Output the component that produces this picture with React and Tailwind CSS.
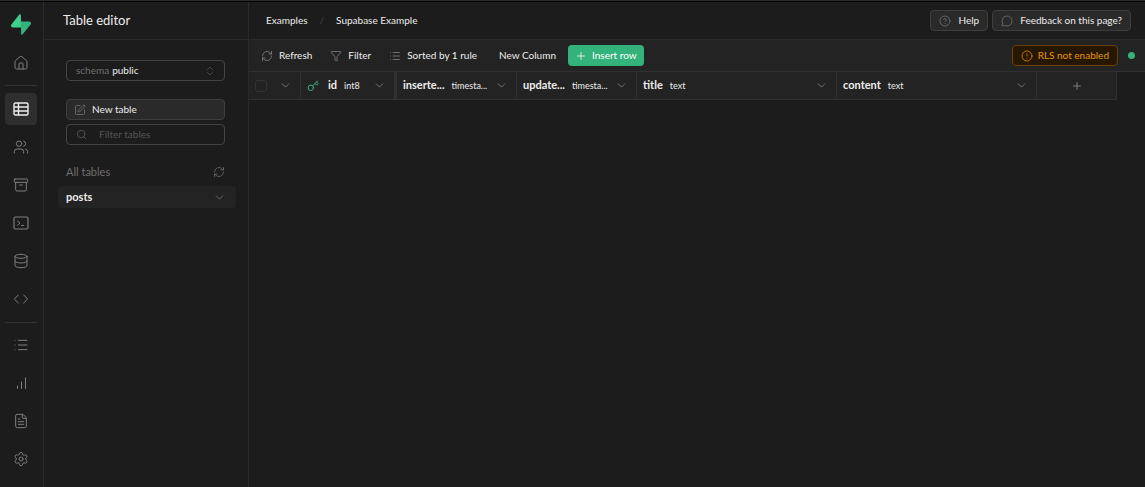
import {
  Archive,
  ChevronDown,
  ChevronsUpDown,
  CircleAlert,
  CircleQuestionMark,
  Code,
  Database,
  FileText,
  Funnel,
  House,
  List,
  MessageCircle,
  Plus,
  RefreshCw,
  Search,
  Settings,
  SquarePen,
  Users,
} from "lucide-react";

const navIcon = { size: 16, strokeWidth: 1.5, "aria-hidden": true };
const smallIcon = { size: 12, strokeWidth: 1.5, "aria-hidden": true };
const chevron = { size: 13, strokeWidth: 1.5, "aria-hidden": true };

const Logo = () => (
  <svg width="20" height="21" viewBox="0 0 109 113" aria-hidden="true">
    <path
      d="M63.7 110.3c-2.900 3.600-8.700 1.600-8.700-3L54 40h45.200c8.200 0 12.800 9.500 7.700 15.900z"
      fill="#34b27b"
    />
    <path
      d="M45.300 2.100c2.900-3.600 8.700-1.600 8.700 3l.4 67.200H9.800C1.600 72.300-2.900 62.800 2.200 56.400z"
      fill="#3ecf8e"
    />
  </svg>
);

const TableIcon = () => (
  <svg width="16" height="14" viewBox="0 0 16 14" fill="none" stroke="currentColor" strokeWidth="1.4" aria-hidden="true">
    <rect x="1" y="1" width="14" height="12" rx="1.5" />
    <path d="M1 5h14M1 9h14M5.500 1v12" />
  </svg>
);

const TerminalIcon = () => (
  <svg width="16" height="14" viewBox="0 0 16 14" fill="none" stroke="currentColor" strokeLinecap="round" strokeLinejoin="round" aria-hidden="true">
    <rect x="1" y="1" width="14" height="12" rx="1.5" strokeWidth="1.2" />
    <path d="M4.500 5l2.500 2-2.500 2.200M8.500 9.500h2" />
  </svg>
);

const BarsIcon = () => (
  <svg width="14" height="14" viewBox="0 0 14 14" fill="none" stroke="currentColor" strokeLinecap="round" aria-hidden="true">
    <path d="M3.500 10v2.500M7.500 6v6.500M11.500 2v10.500" />
  </svg>
);

const KeyIcon = () => (
  <svg width="12" height="12" viewBox="0 0 12 12" fill="none" stroke="#34b27b" strokeLinecap="round" strokeLinejoin="round" aria-hidden="true">
    <circle cx="3.800" cy="7.800" r="2.700" />
    <path d="M5.800 5.800L10.500 1M8 3.600l1.600 1.600 1.600-1.700-1.500-1.600" />
  </svg>
);

const mainNav = [
  { label: "Table editor", icon: <TableIcon />, active: true },
  { label: "Authentication", icon: <Users {...navIcon} /> },
  { label: "Storage", icon: <Archive {...navIcon} /> },
  { label: "SQL editor", icon: <TerminalIcon /> },
  { label: "Database", icon: <Database {...navIcon} /> },
  { label: "API", icon: <Code {...navIcon} /> },
];

const otherNav = [
  { label: "Logs", icon: <List {...navIcon} /> },
  { label: "Reports", icon: <BarsIcon /> },
  { label: "Docs", icon: <FileText {...navIcon} /> },
  { label: "Settings", icon: <Settings {...navIcon} /> },
];

const columns = [
  { name: "id", type: "int8", width: "w-24 min-w-24", primary: true },
  { name: "inserte...", type: "timesta...", width: "w-30 min-w-30" },
  { name: "update...", type: "timesta...", width: "w-30 min-w-30" },
  { name: "title", type: "text", width: "w-50 min-w-50" },
  { name: "content", type: "text", width: "w-50 min-w-50" },
];

const NavItem = ({ label, icon, active }) => (
  <a
    href="#"
    aria-label={label}
    className={`flex size-8 items-center justify-center rounded ${active ? "bg-[#2e2e2e] text-[#ededed]" : "text-[#7e7e7e]"}`}
  >
    {icon}
  </a>
);

const Sidebar = () => (
  <nav className="flex w-11 shrink-0 flex-col items-center border-r border-[#2a2a2a] pr-px">
    <a href="#" aria-label="Home" className="mt-3">
      <Logo />
    </a>
    <div className="mt-3">
      <NavItem label="Project home" icon={<House {...navIcon} />} />
    </div>
    <div className="mt-1.5 mb-[7px] h-px w-8 shrink-0 bg-[#323232]" />
    <div className="flex flex-col gap-1.5">
      {mainNav.map((item) => <NavItem key={item.label} {...item} />)}
    </div>
    <div className="mt-[7px] mb-1.5 h-px w-8 shrink-0 bg-[#323232]" />
    <div className="flex flex-col gap-1.5">
      {otherNav.map((item) => <NavItem key={item.label} {...item} />)}
    </div>
  </nav>
);

const TablePanel = () => (
  <aside className="w-[205px] shrink-0 border-r border-[#2a2a2a]">
    <div className="flex h-[38px] items-center border-b border-[#2a2a2a] px-[19px]">
      <h1 className="text-[13px] text-[#ededed]">Table editor</h1>
    </div>
    <div className="pl-[22px] pr-[23px] pt-5">
      <button className="flex h-[21px] w-full items-center rounded border border-[#444] pl-[9px] pr-2 text-[10px]">
        <span className="text-[#707070]">schema</span>
        <span className="ml-[3px] flex-1 text-left text-[#ededed]">public</span>
        <ChevronsUpDown {...smallIcon} className="text-[#555]" />
      </button>
      <button className="mt-[18px] flex h-[21px] w-full items-center gap-1.5 rounded-sm border border-[#3e3e3e] bg-[#2a2a2a] px-[7px] text-[10px] text-[#ededed]">
        <SquarePen {...smallIcon} className="text-[#777]" />
        New table
      </button>
      <label className="mt-1 flex h-[21px] items-center gap-3 rounded border border-[#444] px-[9px]">
        <Search size={11} strokeWidth={1.5} className="shrink-0 text-[#666]" aria-hidden="true" />
        <input
          type="text"
          aria-label="Filter tables"
          placeholder="Filter tables"
          className="w-full min-w-0 bg-transparent text-[10px] text-[#ededed] outline-none placeholder:text-[#555]"
        />
      </label>
      <div className="mt-[19px] flex h-4 items-center justify-between text-[11px] text-[#707070]">
        <h2>All tables</h2>
        <button aria-label="Refresh tables">
          <RefreshCw {...smallIcon} />
        </button>
      </div>
    </div>
    <a href="#" className="ml-3.5 mr-3 mt-1.5 flex h-[22px] items-center justify-between rounded bg-[#232323] pl-2 pr-2.5 text-[11px] font-bold text-[#ededed]">
      posts
      <ChevronDown {...chevron} className="text-[#777]" />
    </a>
  </aside>
);

const Header = () => (
  <header className="flex h-[38px] items-center border-b border-[#2a2a2a] pl-[17px] pr-3.5 text-[10px] text-[#ededed]">
    <a href="#">Examples</a>
    <span className="mx-3 text-[#444]">/</span>
    <a href="#">Supabase Example</a>
    <div className="ml-auto flex gap-1">
      <button className="flex h-[21px] items-center gap-[7px] rounded border border-[#3e3e3e] bg-[#2a2a2a] px-2">
        <CircleQuestionMark {...smallIcon} className="text-[#777]" />
        Help
      </button>
      <button className="flex h-[21px] items-center gap-[7px] rounded border border-[#3e3e3e] bg-[#2a2a2a] px-2">
        <MessageCircle {...smallIcon} className="text-[#777]" />
        Feedback on this page?
      </button>
    </div>
  </header>
);

const Toolbar = () => (
  <div className="flex h-8 items-center border-b border-[#303030] bg-[#232323] pl-3 pr-2.5 text-[10px] text-[#ededed]">
    <button className="flex items-center gap-1.5">
      <RefreshCw {...smallIcon} className="text-[#888]" />
      Refresh
    </button>
    <button className="ml-[18px] flex items-center gap-1.5">
      <Funnel {...smallIcon} className="text-[#888]" />
      Filter
    </button>
    <button className="ml-[18px] flex items-center gap-1.5">
      <List {...smallIcon} className="text-[#888]" />
      Sorted by 1 rule
    </button>
    <button className="ml-[22px]">New Column</button>
    <button className="ml-3 flex h-[21px] items-center gap-[5px] rounded bg-[#34b27b] px-[7px] text-white">
      <Plus {...smallIcon} />
      Insert row
    </button>
    <button className="ml-auto flex h-[21px] items-center gap-[5px] rounded border border-[#6b4200] bg-[#271700] px-2 text-[#e5970f]">
      <CircleAlert {...smallIcon} />
      RLS not enabled
    </button>
    <span className="ml-2.5 size-[7px] rounded-full bg-[#34b27b]" />
  </div>
);

const Grid = () => (
  <table className="border-separate border-spacing-0 text-left text-[#ededed]">
    <thead>
      <tr className="bg-[#232323]">
        <th className="h-7 w-13 min-w-13 border-r border-b border-[#303030] p-0">
          <div className="flex items-center justify-between pl-1.5 pr-2">
            <input type="checkbox" aria-label="Select all rows" className="size-3 appearance-none rounded-[3px] border border-[#333]" />
            <ChevronDown {...chevron} className="text-[#888]" />
          </div>
        </th>
        {columns.map((col) => (
          <th
            key={col.name}
            className={`${col.width} h-7 border-b border-[#303030] p-0 ${col.primary ? "border-r-3" : "border-r"}`}
          >
            <div className="flex items-center px-1.5">
              {col.primary && <span className="mr-[9px]"><KeyIcon /></span>}
              <span className="text-[11px] font-bold">{col.name}</span>
              <span className="ml-[7px] text-[9px] font-normal">{col.type}</span>
              <ChevronDown {...chevron} className="ml-auto mr-0.5 shrink-0 text-[#888]" />
            </div>
          </th>
        ))}
        <th className="h-7 w-20 min-w-20 border-r border-b border-[#303030] p-0">
          <button aria-label="Add column" className="flex w-full justify-center">
            <Plus {...smallIcon} className="text-[#999]" />
          </button>
        </th>
      </tr>
    </thead>
  </table>
);

export default function App() {
  return (
    <div className="flex min-h-screen flex-col bg-[#1c1c1c] font-[Lato,sans-serif]">
      <div className="h-0.5 border-t border-[#2a2a2a] bg-black" />
      <div className="flex flex-1">
        <Sidebar />
        <TablePanel />
        <main className="min-w-0 flex-1">
          <Header />
          <Toolbar />
          <Grid />
        </main>
      </div>
    </div>
  );
}
